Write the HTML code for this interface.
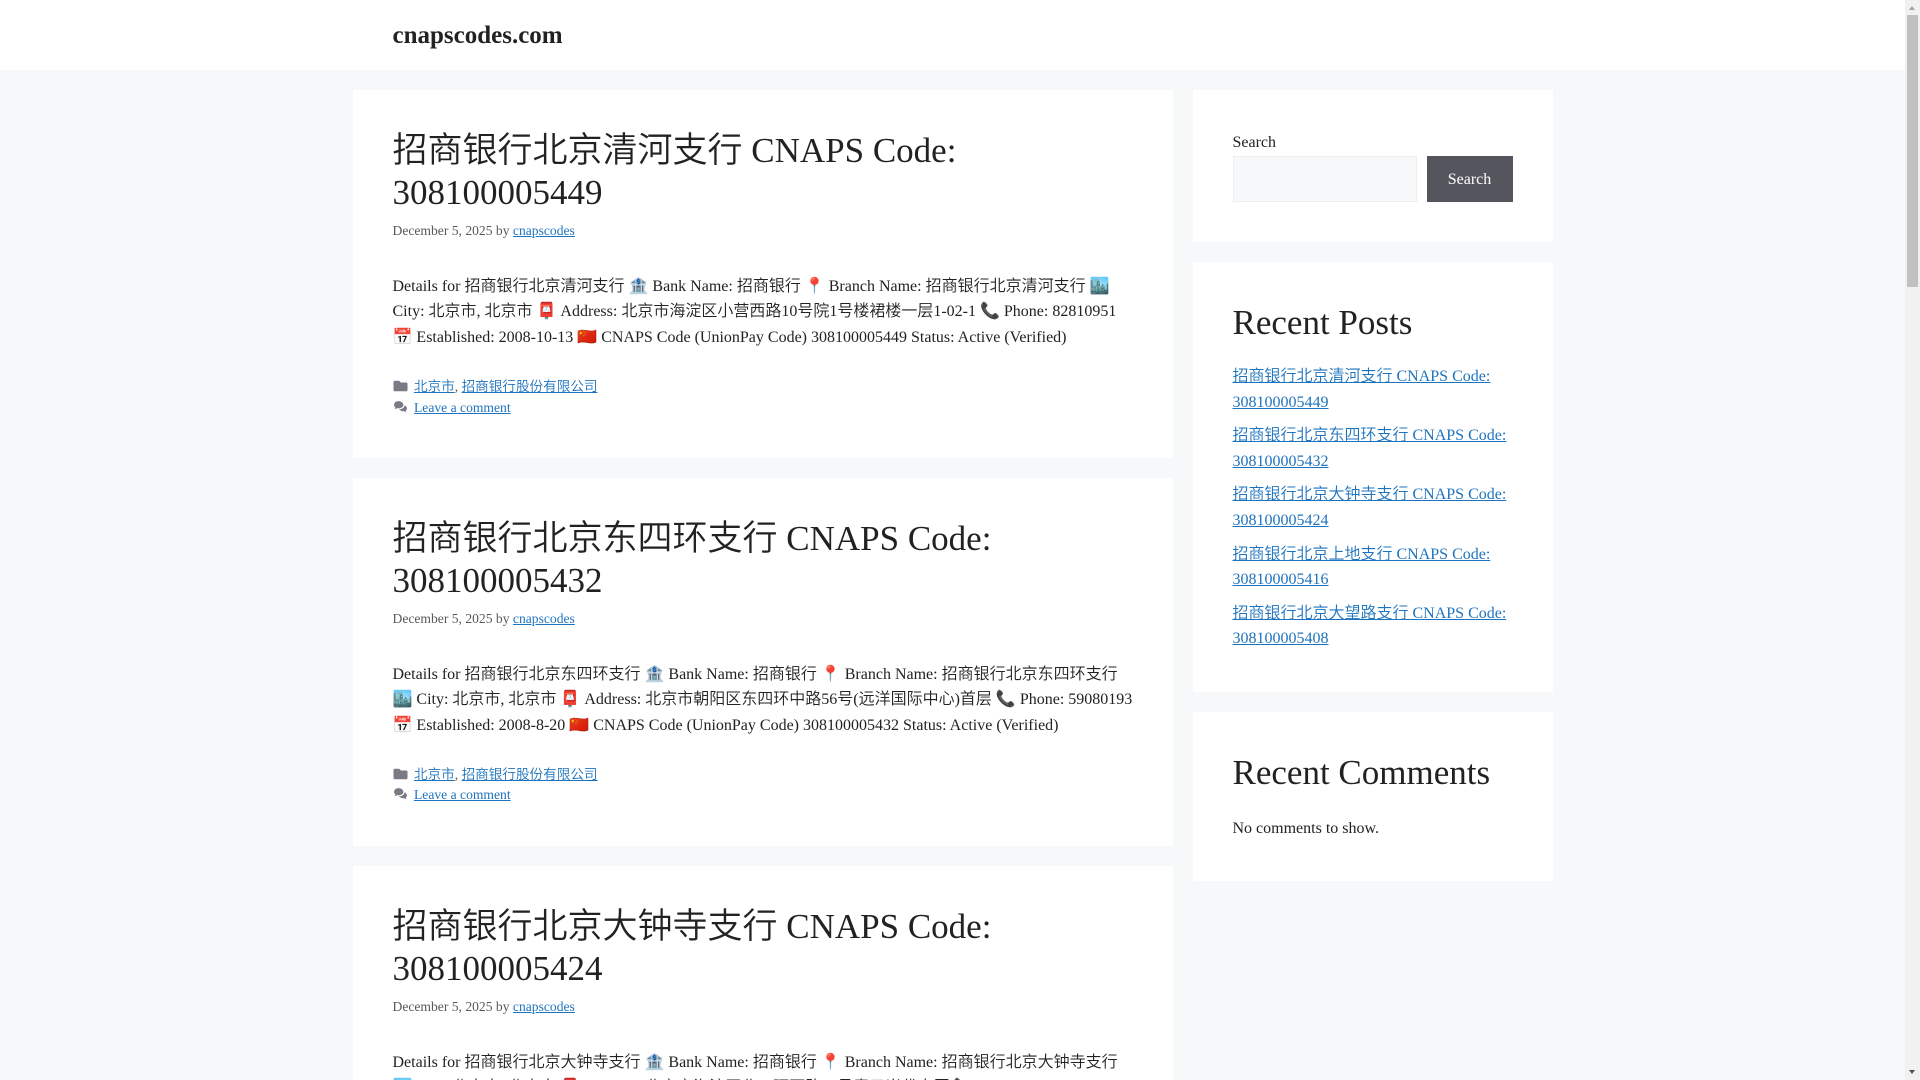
<!DOCTYPE html>
<html lang="en-US"><head><meta charset="utf-8"><title>cnapscodes.com</title>
<style>
*{box-sizing:border-box}
html,body{margin:0;padding:0;width:1920px;height:1080px;overflow:hidden}
body{background:#f7f8f9;color:#222;font-family:"Liberation Serif","Noto Sans CJK SC",serif;font-weight:350;font-size:16px;line-height:1.6;position:relative}
a{color:#1e73be;text-decoration:underline}
header{position:absolute;left:0;top:0;width:1905px;height:70px;background:#fff}
.brand{position:absolute;left:392.5px;top:17px;font-size:25px;line-height:37.5px;font-weight:700;color:#222}
article,.w{position:absolute;background:#fff;padding:40px;overflow:hidden}
article{left:352.5px;width:820px;height:368px}
.w{left:1192.5px;width:360px}
h2{font-weight:350;font-size:35px;line-height:42px;margin:0;color:#222}
.m{font-size:13.6px;line-height:21.76px;color:#595959}
.date{margin-top:6px}
.s{margin:32px 0 0}
.f{position:absolute;left:40px;top:286px;width:700px}
.f div{padding-left:21.5px;position:relative;height:21px}
.f svg{position:absolute;left:0;top:3px;width:15px;height:14px;fill:#7a7a84}
label{display:block;line-height:26.5px}
.i{position:absolute;left:40px;top:66px;width:184px;height:46px;background:#f7f8f9;border:1px solid #eee}
.b{position:absolute;left:234px;top:66px;width:86px;height:46px;background:#55555e;color:#fff;text-align:center;line-height:47px}
ul{list-style:none;margin:20px 0 0;padding:0}
li{margin-bottom:8px}
.sb{position:absolute;left:1905px;top:0;width:15px;height:1080px;background:#f1f1f1}
.th{position:absolute;left:2px;top:15px;width:11px;height:272px;background:#c1c1c1}
.u,.d{position:absolute;left:4px;width:0;height:0;border-left:3.5px solid transparent;border-right:3.5px solid transparent}
.u{top:6px;border-bottom:4px solid #a3a3a3}.d{top:1070px;border-top:4px solid #505050}
</style></head><body>
<header><div class="brand">cnapscodes.com</div></header>

<article style="top:90px">
<h2>招商银行北京清河支行 CNAPS Code: 308100005449</h2>
<div class="m date">December 5, 2025 by <a href="#">cnapscodes</a></div>
<p class="s">Details for 招商银行北京清河支行 🏦 Bank Name: 招商银行 📍 Branch Name: 招商银行北京清河支行 🏙️ City: 北京市, 北京市 📮 Address: 北京市海淀区小营西路10号院1号楼裙楼一层1-02-1 📞 Phone: 82810951 📅 Established: 2008-10-13 🇨🇳 CNAPS Code (UnionPay Code) 308100005449 Status: Active (Verified)</p>
<div class="m f"><div><svg viewBox="0 0 512 512"><path d="M464 128H272l-64-64H48C21.5 64 0 85.5 0 112v288c0 26.5 21.5 48 48 48h416c26.5 0 48-21.500 48-48V176c0-26.500-21.500-48-48-48z"/></svg><a href="#">北京市</a>, <a href="#">招商银行股份有限公司</a></div><div><svg viewBox="0 0 512 512"><path d="M190 40C90 40 20 100 20 180c0 40 20 72 50 96-6 26-24 48-34 60 40-2 76-20 100-38 18 4 36 6 54 6 100 0 170-56 170-124S290 40 190 40z"/><path d="M400 190c0 84-84 150-190 150h-6c30 44 90 72 150 72 14 0 28-2 42-4 20 16 50 32 84 34-10-12-24-30-30-52 26-22 42-50 42-82 0-50-36-92-92-112z"/></svg><a href="#">Leave a comment</a></div></div>
</article>

<article style="top:478px">
<h2>招商银行北京东四环支行 CNAPS Code: 308100005432</h2>
<div class="m date">December 5, 2025 by <a href="#">cnapscodes</a></div>
<p class="s">Details for 招商银行北京东四环支行 🏦 Bank Name: 招商银行 📍 Branch Name: 招商银行北京东四环支行 🏙️ City: 北京市, 北京市 📮 Address: 北京市朝阳区东四环中路56号(远洋国际中心)首层 📞 Phone: 59080193 📅 Established: 2008-8-20 🇨🇳 CNAPS Code (UnionPay Code) 308100005432 Status: Active (Verified)</p>
<div class="m f"><div style="height:20px"><svg viewBox="0 0 512 512"><path d="M464 128H272l-64-64H48C21.5 64 0 85.5 0 112v288c0 26.5 21.5 48 48 48h416c26.5 0 48-21.500 48-48V176c0-26.500-21.500-48-48-48z"/></svg><a href="#">北京市</a>, <a href="#">招商银行股份有限公司</a></div><div><svg viewBox="0 0 512 512"><path d="M190 40C90 40 20 100 20 180c0 40 20 72 50 96-6 26-24 48-34 60 40-2 76-20 100-38 18 4 36 6 54 6 100 0 170-56 170-124S290 40 190 40z"/><path d="M400 190c0 84-84 150-190 150h-6c30 44 90 72 150 72 14 0 28-2 42-4 20 16 50 32 84 34-10-12-24-30-30-52 26-22 42-50 42-82 0-50-36-92-92-112z"/></svg><a href="#">Leave a comment</a></div></div>
</article>

<article style="top:866px;height:214px">
<h2>招商银行北京大钟寺支行 CNAPS Code: 308100005424</h2>
<div class="m date">December 5, 2025 by <a href="#">cnapscodes</a></div>
<p class="s">Details for 招商银行北京大钟寺支行 🏦 Bank Name: 招商银行 📍 Branch Name: 招商银行北京大钟寺支行 🏙️ City: 北京市, 北京市 📮 Address: 北京市海淀区北三环西路43号青云当代大厦 📞 Phone: 82129988</p>
</article>

<div class="w" style="top:90px;height:152px"><label>Search</label><div class="i"></div><div class="b">Search</div></div>

<div class="w" style="top:262px;height:430px">
<h2>Recent Posts</h2>
<ul>
<li><a href="#">招商银行北京清河支行 CNAPS Code: 308100005449</a></li>
<li><a href="#">招商银行北京东四环支行 CNAPS Code: 308100005432</a></li>
<li><a href="#">招商银行北京大钟寺支行 CNAPS Code: 308100005424</a></li>
<li><a href="#">招商银行北京上地支行 CNAPS Code: 308100005416</a></li>
<li><a href="#">招商银行北京大望路支行 CNAPS Code: 308100005408</a></li>
</ul>
</div>

<div class="w" style="top:712px;height:169px">
<h2>Recent Comments</h2>
<div style="margin-top:22px">No comments to show.</div>
</div>

<div class="sb"><div class="u"></div><div class="th"></div><div class="d"></div></div>
</body></html>
